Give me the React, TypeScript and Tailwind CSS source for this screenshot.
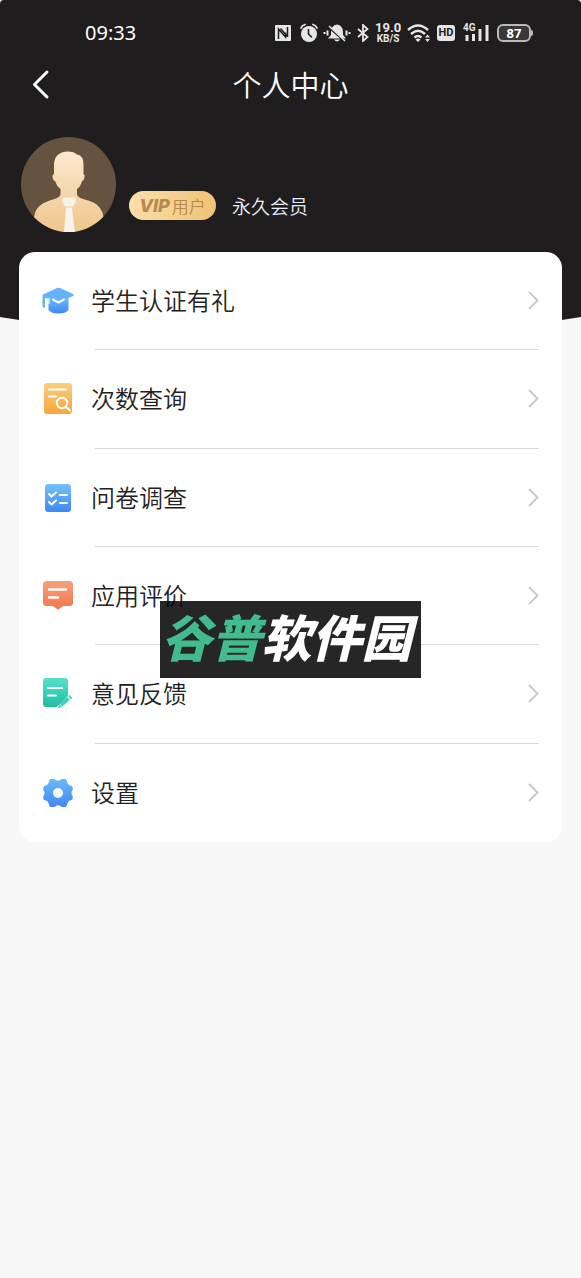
import type { ReactNode } from 'react';

type MenuItem = { id: string; label: string; icon: ReactNode };

function Gradient({ id, from, to }: { id: string; from: string; to: string }) {
  return (
    <linearGradient id={id} x1="0" y1="0" x2="0" y2="1">
      <stop offset="0" stopColor={from} />
      <stop offset="1" stopColor={to} />
    </linearGradient>
  );
}

const iconClass = 'w-8 h-8 shrink-0';

const menuItems: MenuItem[] = [
  {
    id: 'student',
    label: '学生认证有礼',
    icon: (
      <svg viewBox="0 0 32 32" className={iconClass}>
        <defs><Gradient id="cap" from="#6cbcf8" to="#3e86f6" /></defs>
        <path d="M6.500 13h20v12c-2 2.500-5 3.500-10 3.500s-8-1-10-3.500z" fill="url(#cap)" />
        <path d="M1 9.500 15 3Q16.500 2.300 18 3L31 9Q32.500 10 31 11L26.500 13 18 17.500Q16.500 18.200 15 17.500L7 13.500 3 13v9q-1.200 1.500-2.500 0V10.500z" fill="#66b3f7" />
        <path d="M7 13v6" stroke="#fff" strokeWidth="1" />
        <path d="M11 14.500 16.500 17.500 22 14.500" fill="none" stroke="#fff" strokeWidth="2" strokeLinecap="round" strokeLinejoin="round" />
      </svg>
    ),
  },
  {
    id: 'count',
    label: '次数查询',
    icon: (
      <svg viewBox="0 0 32 32" className={iconClass}>
        <defs><Gradient id="doc" from="#f9cf7e" to="#f6a63c" /></defs>
        <rect x="2" y="0" width="28" height="31" rx="3" fill="url(#doc)" />
        <path d="M7 6.500h17M7 13.500h7" stroke="#fff" strokeWidth="2" strokeLinecap="round" />
        <circle cx="20" cy="20" r="5.200" fill="none" stroke="#fff" strokeWidth="2" />
        <path d="m24 24 4 3.500" stroke="#fff" strokeWidth="2.200" strokeLinecap="round" />
      </svg>
    ),
  },
  {
    id: 'survey',
    label: '问卷调查',
    icon: (
      <svg viewBox="0 0 32 32" className={iconClass}>
        <defs><Gradient id="list" from="#74c2f9" to="#3d88f6" /></defs>
        <rect x="3" y="2" width="26" height="28" rx="3" fill="url(#list)" />
        <path d="m7 12 2.500 2.500 4.500-4M7 20l2.500 2.500 4.500-4M18 13h7M18 21h7" fill="none" stroke="#fff" strokeWidth="2" strokeLinecap="round" strokeLinejoin="round" />
      </svg>
    ),
  },
  {
    id: 'rating',
    label: '应用评价',
    icon: (
      <svg viewBox="0 0 32 32" className={iconClass}>
        <defs><Gradient id="chat" from="#f6a07b" to="#f2774c" /></defs>
        <path d="M4.500 1h23Q31 1 31 4.500v18Q31 26 27.500 26H21l-4 3q-1 .8-2 0l-4-3H4.500Q1 26 1 22.500v-18Q1 1 4.500 1z" fill="url(#chat)" />
        <path d="M7 9.500h17M7 17.500h9" stroke="#fff" strokeWidth="2.400" strokeLinecap="round" />
      </svg>
    ),
  },
  {
    id: 'feedback',
    label: '意见反馈',
    icon: (
      <svg viewBox="0 0 32 32" className={iconClass}>
        <defs><Gradient id="note" from="#55e0cc" to="#1fbfa3" /></defs>
        <path d="M4 0h19Q26 0 26 3.500V18L14.500 29H4Q1 29 1 25.500v-22Q1 0 4 0z" fill="url(#note)" />
        <path d="M6 10h14M6 17.500h8" stroke="#fff" strokeWidth="2.200" strokeLinecap="round" />
        <path d="m19 27 7.500-6.500" stroke="#45cdb5" strokeWidth="4" />
        <path d="m27.500 19.800 1.500-1.300" stroke="#45cdb5" strokeWidth="4" />
        <path d="m16 30 1-4.500 3.200 3.500z" fill="#45cdb5" />
      </svg>
    ),
  },
  {
    id: 'settings',
    label: '设置',
    icon: (
      <svg viewBox="0 0 32 32" className={iconClass}>
        <defs><Gradient id="gear" from="#6cb8f8" to="#4087f5" /></defs>
        <path
          d="M9 2h3q1 0 1.500 1 2.500 1.500 5 0 .5-1 1.500-1h3q1 0 1.500 1l1 3q.5 1.500 2 2.200l2 .8q1 .5 1.200 1.500V13q-2.500 3 0 6v2.500q-.2 1-1.200 1.500l-2 .8q-1.500.7-2 2.200l-1 3q-.5 1-1.500 1h-3q-1 0-1.500-1-2.500-1.500-5 0-.5 1-1.500 1H9q-1 0-1.500-1l-1-3Q6 24.500 4.500 23.800l-2-.8q-1-.5-1.200-1.500V19q2.500-3 0-6v-2.500q.2-1 1.200-1.500l2-.8Q6 7.500 6.500 6l1-3Q8 2 9 2z"
          fill="url(#gear)"
        />
        <circle cx="16" cy="16" r="5" fill="#f4f9ff" />
      </svg>
    ),
  },
];

function StatusBar() {
  return (
    <div className="flex items-center justify-between h-[65px] pl-[85px] pr-12 text-[#e6e6e6]">
      <span className="font-['Noto_Sans'] text-[20px] leading-6 text-white">09:33</span>
      <div className="flex items-center">
        <svg viewBox="0 0 18 18" className="w-[18px] h-[18px]">
          <rect x="1" y="1" width="16" height="16" rx="1" fill="currentColor" />
          <path d="M4.500 15V5l7 8V8.500M13.500 3v10M6.500 4.500l7 8" fill="none" stroke="#1f1d1e" strokeWidth="1.500" />
        </svg>
        <svg viewBox="0 0 20 20" className="w-5 h-5 ml-[7px]">
          <circle cx="10" cy="11" r="8" fill="currentColor" />
          <path d="M2 5q1-2.500 4-3.500M18 5q-1-2.500-4-3.500" fill="none" stroke="currentColor" strokeWidth="1.800" strokeLinecap="round" />
          <path d="M9.500 6.500V11l3 3" fill="none" stroke="#1f1d1e" strokeWidth="1.600" strokeLinecap="round" />
        </svg>
        <svg viewBox="0 0 28 20" className="w-7 h-5 ml-1">
          <path d="M14 1.500q6 1 6 7.500v3l3 3.500H5l3-3.500V9q0-6.500 6-7.500zM11 16.500h6q-3 4-6 0z" fill="currentColor" />
          <path d="m6 4.500 16 14" stroke="#1f1d1e" strokeWidth="2" />
          <path d="m6 3 16 15" stroke="currentColor" strokeWidth="1.500" />
          <path d="M4.500 7.500v5M23.500 7.500v5M1.500 9v2M26.500 9v2" stroke="currentColor" strokeWidth="2" />
        </svg>
        <svg viewBox="0 0 12 18" className="w-3 h-[18px] ml-[6px]">
          <path d="m1 5 9.500 8L6 17V1l4.500 4L1 13" fill="none" stroke="currentColor" strokeWidth="1.800" />
        </svg>
        <div className="ml-[6px] w-[26px] text-center font-['Roboto'] font-bold whitespace-nowrap">
          <div className="text-[13px] leading-[12px]">19.0</div>
          <div className="text-[10px] leading-[9px]">KB/S</div>
        </div>
        <svg viewBox="0 0 24 20" className="w-6 h-5 ml-[6px]">
          <path d="M1 7q10-9 20 0M4 11q7-6.500 14 0M7.500 14.500q3.500-3 7 0" fill="none" stroke="currentColor" strokeWidth="2.400" />
          <path d="m11 19-2.500-2.500q2.500-2 5 0zM18 14.500l2.500-3 2.500 3zM18 16h5l-2.500 3z" fill="currentColor" />
        </svg>
        <div className="ml-[6px] flex items-center justify-center w-[18px] h-4 rounded-[3px] bg-[#e6e6e6] text-[#1f1d1e] font-['Roboto'] font-bold text-[11px] leading-4">HD</div>
        <div className="relative ml-2 w-[26px] h-5">
          <span className="absolute left-0 top-0 font-['Roboto'] font-bold text-[10px] leading-[10px]">4G</span>
          <svg viewBox="0 0 26 20" className="w-[26px] h-5">
            <path d="M4 12v6M10.500 11v7M17 6v12M24 2v16" stroke="currentColor" strokeWidth="3" />
          </svg>
        </div>
        <div className="ml-2 flex items-center">
          <div className="w-[34px] h-[18px] border-2 border-[#b9b9b9] rounded-[6px] bg-[#393738] text-center font-['Noto_Sans'] font-bold text-[13px] leading-[14px] text-white">87</div>
          <div className="w-[2px] h-[6px] rounded-r bg-[#b9b9b9]" />
        </div>
      </div>
    </div>
  );
}

function Avatar() {
  return (
    <svg viewBox="0 0 95 95" className="w-[95px] h-[95px] shrink-0" role="img" aria-label="头像">
      <defs>
        <Gradient id="body" from="#fde8cf" to="#eec68b" />
        <clipPath id="round"><circle cx="47.500" cy="47.500" r="47.500" /></clipPath>
      </defs>
      <g clipPath="url(#round)">
        <rect width="95" height="95" fill="#65533f" />
        <path
          d="M33 28Q33 15 47 14.500q6 0 9 3 7 1 6.500 11V37q2 1 .5 5-.5 2-2 2-1 5-5 8v5q0 3 6 5 13 3 17 9 3 4 3.500 9v15H13V80q.5-5 3.500-9 5-6 17-9 6-2 6-5v-5q-4-3-5.500-8-1.500 0-2-2-1.500-4 1-5z"
          fill="url(#body)"
        />
        <path d="M42 60.500h12l1 4-3 5h-8l-3-5zM45 70.500h6l3 25H43z" fill="#f8f2ed" />
      </g>
    </svg>
  );
}

export default function App() {
  return (
    <div className="relative min-h-screen bg-[#f7f7f7] font-['Noto_Sans_CJK_SC',sans-serif]">
      <header className="h-[317px] bg-[#1f1d1e] rounded-t-[4px]">
        <StatusBar />
        <div className="grid grid-cols-[80px_1fr_80px] items-center h-10">
          <button aria-label="返回" className="ml-[30px] w-5 h-8">
            <svg viewBox="0 0 20 32" className="w-5 h-8">
              <path d="M17 3 4.500 15.500 17 28" fill="none" stroke="#fff" strokeWidth="3" strokeLinecap="round" strokeLinejoin="round" />
            </svg>
          </button>
          <h1 className="text-center text-[29px] leading-9 pb-[2px] font-[350] text-white">个人中心</h1>
        </div>
        <div className="flex items-end mt-8 pl-[21px]">
          <Avatar />
          <span className="flex items-center justify-center gap-[2px] ml-[13px] mb-3 w-[87px] h-[29px] rounded-full bg-linear-to-r from-[#fbdfaa] to-[#efc274] text-[#b68a50]">
            <span className="font-['Inter'] font-extrabold italic text-[18px]">VIP</span>
            <span className="text-[17px] font-[350]">用户</span>
          </span>
          <span className="ml-4 mb-3 text-[19px] leading-[29px] font-[350] text-[#e9ebfa]">永久会员</span>
        </div>
      </header>
      <svg viewBox="0 0 581 24" preserveAspectRatio="none" className="block w-full h-6">
        <path d="M0-1V0Q290 48 581 0V-1z" fill="#1f1d1e" />
      </svg>

      <main className="relative -mt-[89px] px-[19px]">
        <nav className="grid grid-rows-6 h-[590px] rounded-2xl bg-white">
          {menuItems.map((item, i) => (
            <a key={item.id} href={`#${item.id}`} className="flex items-center pl-[23px] pr-[23px]">
              {item.icon}
              <span className={`relative flex flex-1 items-center justify-between self-stretch ml-[17px] ${
                i < menuItems.length - 1 ? 'after:absolute after:left-1 after:right-0 after:bottom-0 after:h-px after:bg-[#d9d9d9]' : ''
              }`}>
                <span className="text-[24px] leading-8 pb-[2px] font-[350] text-[#222]">{item.label}</span>
                <svg viewBox="0 0 12 20" className="w-3 h-5">
                  <path d="m2 1 8.500 8.500L2 18" fill="none" stroke="#c9c9c9" strokeWidth="2" />
                </svg>
              </span>
            </a>
          ))}
        </nav>
      </main>

      <div className="absolute inset-0 flex items-center justify-center pointer-events-none">
        <div className="w-[261px] h-[77px] pr-2 bg-black/85 text-center text-[50px] leading-[68px] font-black italic text-white whitespace-nowrap">
          <span className="text-[#43bb90]">谷普</span>软件园
        </div>
      </div>
    </div>
  );
}
